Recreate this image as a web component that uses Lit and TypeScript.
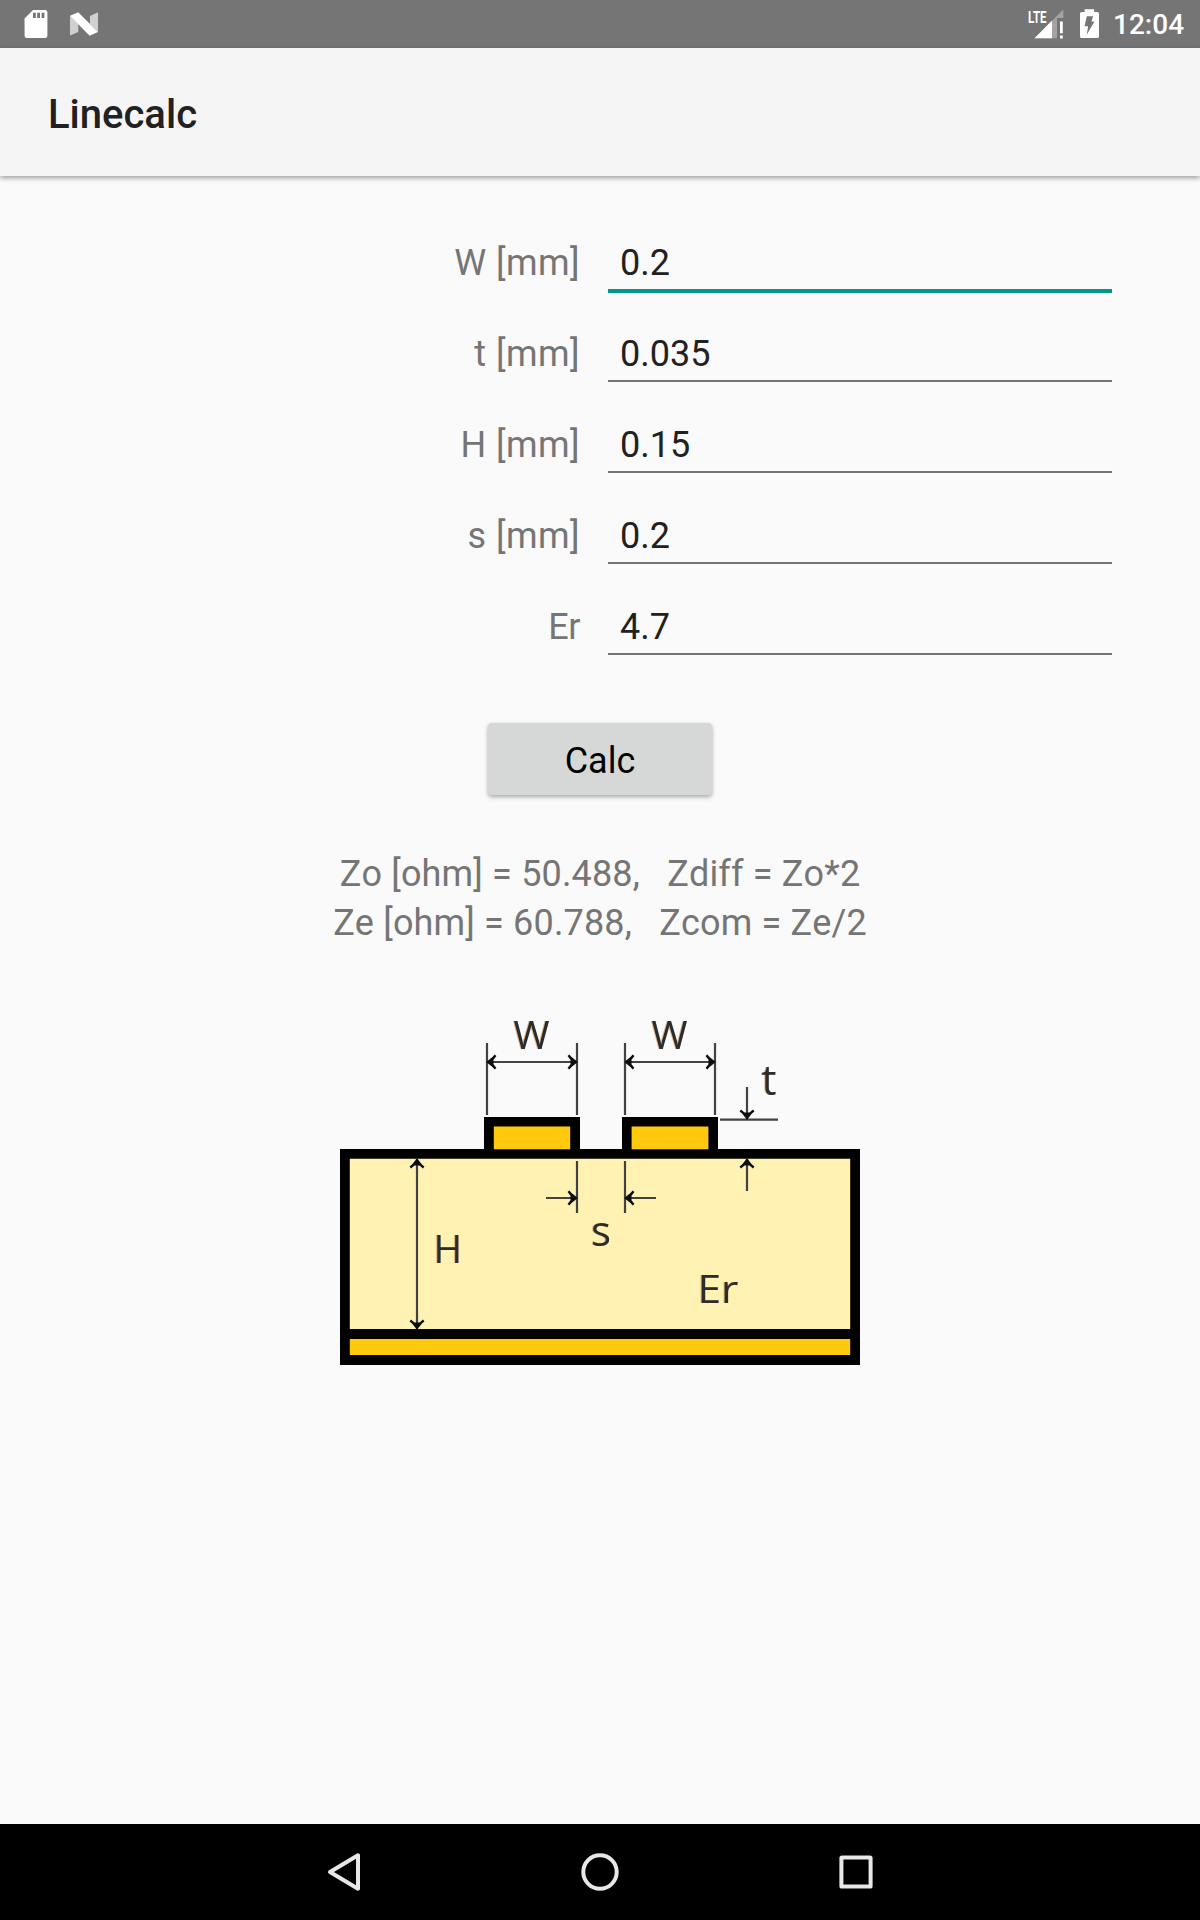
import { LitElement, html, css, svg } from "lit";
import { customElement, property } from "lit/decorators.js";
import { classMap } from "lit/directives/class-map.js";

@customElement("status-bar")
class StatusBar extends LitElement {
  static styles = css`
    :host { display: flex; height: 48px; background: #757575; color: #fff; justify-content: space-between; align-items: center; }
    svg { display: block; }
    .left { padding-left: 20px; }
    .right { display: flex; align-items: center; padding-right: 17px; }
    .time { font: 500 28px/46px Roboto, sans-serif; width: 70px; margin-top: 2px; height: 46px; text-align: left; white-space: nowrap; }
    .lte { font: 700 16.5px Roboto, sans-serif; fill: #fff; }
  `;
  render() {
    return html`
      <svg class="left" width="90" height="48" viewBox="20 0 90 48">
        <path fill="#fff" d="M33 10H45.2a2.2 2.2 0 0 1 2.2 2.2V35.8a2.2 2.2 0 0 1-2.2 2.2H26.8a2.2 2.2 0 0 1-2.2-2.2L24.5 18.5Z" />
        <path fill="#757575" d="M33 12.7h2.8v5.3H33zM37.2 12.7H40v5.3h-2.8zM41.6 12.7h2.8v5.3h-2.8z" />
        <path fill="#d0d0d0" d="M70 15.5 78.3 24V32L70 35.5ZM98 12.3 90 16V24L98 32Z" />
        <path fill="#fff" d="M70 15.8 78.2 12.3 98 32 89.6 35.8Z" />
      </svg>
      <div class="right">
        <svg width="85" height="48" viewBox="1028 0 85 48">
          <text class="lte" x="1028" y="22.5" textLength="18.5" lengthAdjust="spacingAndGlyphs">LTE</text>
          <path fill="#a3a3a3" d="M1063.3 9.5V18H1057V38.3H1034.5Z" />
          <path fill="#fff" d="M1052 20.5V38.3H1034.5Z" />
          <path fill="#fff" d="M1060 21.5h2.8v11.8h-2.8zM1060 35.5h2.8v2.9h-2.8z" />
          <path fill="#fff" d="M1084.7 9.2h9.4V12h3.3a1.6 1.6 0 0 1 1.6 1.6V36.4a1.6 1.6 0 0 1-1.6 1.6h-15.8a1.6 1.6 0 0 1-1.6-1.6V13.6a1.6 1.6 0 0 1 1.6-1.6h3.1Z" />
          <path fill="#757575" d="M1086.8 16.3h6.3l-1.6 5.2h2.9l-7.6 13.2 1.3-8.5h-3.6Z" />
        </svg>
        <span class="time">12:04</span>
      </div>`;
  }
}

@customElement("field-row")
class FieldRow extends LitElement {
  @property() label = "";
  @property() value = "";
  @property({ type: Boolean }) active = false;
  static styles = css`
    :host { display: flex; height: 91px; font: 36px/42px Roboto, sans-serif; }
    .label { width: 580px; padding-top: 10px; text-align: right; color: #757575; box-sizing: border-box; letter-spacing: -0.5px; }
    .label.unit { letter-spacing: 0.45px; }
    .box { box-sizing: border-box; width: 504px; height: 59px; margin-left: 28px; border-bottom: 2px solid #757575; padding: 10px 12px 0; color: #212121; }
    .box.active { height: 61px; border-bottom: 4px solid #009688; }
    .input { display: block; width: 100%; height: 42px; line-height: 42px; margin: 0; padding: 0; border: 0; outline: 0; background: none; font: inherit; color: inherit; }
  `;
  render() {
    return html`<span class=${classMap({ label: true, unit: this.label.includes("[") })}>${this.label}</span>
      <div class=${classMap({ box: true, active: this.active })}>
        <input class="input" .value=${this.value} value=${this.value} aria-label=${this.label} />
      </div>`;
  }
}

@customElement("line-diagram")
class LineDiagram extends LitElement {
  static styles = css`
    :host { display: block; width: 520px; height: 370px; }
    svg { display: block; overflow: visible; }
    .dim { stroke: #424242; stroke-width: 2.2; fill: none; }
    .tip { stroke: #0c0c0c; stroke-width: 2.4; fill: none; }
    .core { fill: #0c0c0c; }
    .txt { font-family: "Open Sans", "Noto Sans", sans-serif; font-size: 39px; fill: #2c2c2c; filter: drop-shadow(-0.9px 0 0 rgba(255, 150, 40, 0.6)) drop-shadow(0.9px 0 0 rgba(60, 170, 255, 0.5)); }
    .tall { font-size: 42px; }
  `;
  private arrow(x: number, y: number, angle: number) {
    return svg`<g transform="translate(${x} ${y}) rotate(${angle})">
      <path class="tip" d="M8.5 -6.7 6.5 -4.2 1.2 0 6.5 4.2 8.5 6.7" />
      <path class="core" d="M0.5 0 6.5 -4V4Z" />
    </g>`;
  }
  render() {
    return html`<svg width="520" height="370" viewBox="340 995 520 370">
      <path fill="#000" d="M340 1149H484V1117H580V1149H622V1117H718V1149H860V1365H340Z" />
      <path fill="#fff2b3" d="M349.8 1158.8H850.2V1329H349.8Z" />
      <path fill="#ffc90e" d="M349.8 1339H850.2V1355H349.8ZM493.8 1126.5H570.2V1149.2H493.8ZM631.6 1126.5H708.4V1149.2H631.6Z" />
      <path class="dim" d="M487 1043V1115M577 1043V1115M625 1043V1115M715 1043V1115M487 1062H577M625 1062H715
        M577 1161V1213M625 1161V1213M546 1198H577M625 1198H656M417 1159V1329
        M747 1087V1119M720 1119.7H778M747 1159V1191" />
      ${this.arrow(487, 1062, 0)}${this.arrow(577, 1062, 180)}
      ${this.arrow(625, 1062, 0)}${this.arrow(715, 1062, 180)}
      ${this.arrow(577, 1198, 180)}${this.arrow(625, 1198, 0)}
      ${this.arrow(417, 1159, 90)}${this.arrow(417, 1329, 270)}
      ${this.arrow(747, 1119, 270)}${this.arrow(747, 1159, 90)}
      <text class="txt" x="513.5" y="1049">W</text>
      <text class="txt" x="651.5" y="1049">W</text>
      <text class="txt tall" x="761.5" y="1095">t</text>
      <text class="txt" x="433.5" y="1263">H</text>
      <text class="txt tall" x="591" y="1245.5">s</text>
      <text class="txt" x="697.5" y="1303" textLength="41" lengthAdjust="spacingAndGlyphs">Er</text>
    </svg>`;
  }
}

@customElement("nav-bar")
class NavBar extends LitElement {
  static styles = css`
    :host { display: flex; height: 96px; background: #000; justify-content: center; align-items: center; gap: 200px; }
    svg { display: block; fill: none; stroke: #e8e8e8; stroke-width: 4; }
  `;
  render() {
    return html`
      <svg width="56" height="56" viewBox="316 1844 56 56"><path stroke-linejoin="round" d="M358 1855.3V1888.7L330 1872Z" /></svg>
      <svg width="56" height="56" viewBox="-28 -28 56 56"><circle r="16.7" /></svg>
      <svg width="56" height="56" viewBox="-28 -28 56 56"><rect x="-14.6" y="-14.6" width="29.2" height="29.2" rx="0.6" /></svg>`;
  }
}

@customElement("app-root")
class AppRoot extends LitElement {
  static styles = css`
    :host { display: flex; flex-direction: column; height: 1920px; width: 1200px; overflow: hidden; background: #fafafa; font-family: Roboto, sans-serif; }
    .bar { height: 128px; flex: none; box-sizing: border-box; padding: 3px 48px 0; background: #f5f5f5; box-shadow: 0 2px 5px rgba(0, 0, 0, 0.38); font: 500 40px/128px Roboto, sans-serif; color: #212121; }
    .content { flex: 1; display: flex; flex-direction: column; align-items: center; padding-top: 56px; }
    .fields { width: 1200px; }
    .calc { flex: none; width: 224px; height: 72px; margin-top: 36px; padding: 3px 0 0; border: 0; border-radius: 4px; background: #d6d8d7; box-shadow: 0 2px 4px rgba(0, 0, 0, 0.33); font: 36px/42px Roboto, sans-serif; color: #000; }
    .results { margin-top: 55px; font-size: 36px; line-height: 49px; color: #757575; text-align: center; white-space: pre; font-kerning: none; letter-spacing: 0.16px; }
    .diagram { margin-top: 47px; }
  `;
  private fields = [
    { label: "W [mm]", value: "0.2" },
    { label: "t [mm]", value: "0.035" },
    { label: "H [mm]", value: "0.15" },
    { label: "s [mm]", value: "0.2" },
    { label: "Er", value: "4.7" },
  ];
  private results = ["Zo [ohm] = 50.488,   Zdiff = Zo*2", "Ze [ohm] = 60.788,   Zcom = Ze/2"];
  render() {
    return html`
      <status-bar></status-bar>
      <header class="bar">Linecalc</header>
      <main class="content">
        <div class="fields">
          ${this.fields.map((f, i) => html`<field-row label=${f.label} value=${f.value} ?active=${i === 0}></field-row>`)}
        </div>
        <button class="calc">Calc</button>
        <div class="results">${this.results.map((r) => html`<div>${r}</div>`)}</div>
        <line-diagram class="diagram"></line-diagram>
      </main>
      <nav-bar></nav-bar>`;
  }
}
